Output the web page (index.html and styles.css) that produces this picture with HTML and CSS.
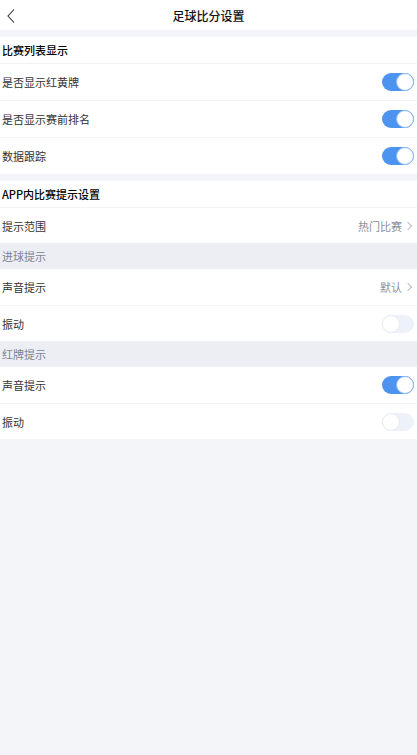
FILE: index.html
```html
<!DOCTYPE html>
<html lang="zh-CN">
<head>
  <meta charset="UTF-8" />
  <title>足球比分设置</title>
  <link rel="stylesheet" href="styles.css">
</head>
<body>

<div class="topbar">
  <span class="back">
    <svg width="10" height="16" viewBox="0 0 10 16"><path d="M8 1.5 L2 8 L8 14.5" fill="none" stroke="#333" stroke-width="1.1"/></svg>
  </span>
  <div class="title">足球比分设置</div>
</div>

<div class="group">
  <div class="group-title">比赛列表显示</div>
  <div class="row"><span>是否显示红黄牌</span><span class="switch on"></span></div>
  <div class="row"><span>是否显示赛前排名</span><span class="switch on"></span></div>
  <div class="row"><span>数据跟踪</span><span class="switch on"></span></div>
</div>

<div class="group compact">
  <div class="group-title">APP内比赛提示设置</div>
  <div class="row"><span>提示范围</span><span class="value">热门比赛 <i class="arrow"></i></span></div>

  <div class="sub-title">进球提示</div>
  <div class="row first"><span>声音提示</span><span class="value">默认 <i class="arrow"></i></span></div>
  <div class="row"><span>振动</span><span class="switch"></span></div>

  <div class="sub-title">红牌提示</div>
  <div class="row first"><span>声音提示</span><span class="switch on"></span></div>
  <div class="row"><span>振动</span><span class="switch"></span></div>
</div>

</body>
</html>
```

FILE: styles.css
```css
body {
    margin: 0;
    background-color: #f4f5f9;
    font-family: "Noto Sans CJK SC", "Noto Sans", sans-serif;
    color: #222;
}

.topbar {
    height: 30px;
    background-color: #fff;
    display: flex;
    align-items: center;
    justify-content: center;
    position: relative;
}

.topbar .back {
    position: absolute;
    left: 6px;
    top: 5px;
}

.topbar .title {
    font-size: 12px;
    font-weight: 500;
    color: #111;
}

.group {
    background-color: #fff;
    margin-top: 7px;
}

.group-title {
    height: 26px;
    line-height: 26px;
    padding-left: 2px;
    font-size: 11px;
    font-weight: 500;
    color: #000;
}

.sub-title {
    height: 26px;
    line-height: 26px;
    padding-left: 2px;
    font-size: 11px;
    color: #7c8394;
    background-color: #eceef3;
}

.row {
    height: 36px;
    border-top: 1px solid #f1f2f5;
    display: flex;
    align-items: center;
    justify-content: space-between;
    padding: 0 3px 0 2px;
    font-size: 11px;
    color: #333;
}

.compact .row {
    height: 35px;
}

.compact .row.first {
    height: 36px;
    border-top: none;
}

.value {
    color: #8a8f9c;
    display: flex;
    align-items: center;
    gap: 3px;
}

.arrow {
    width: 5px;
    height: 5px;
    border-top: 1px solid #b8bcc5;
    border-right: 1px solid #b8bcc5;
    transform: rotate(45deg);
    margin-right: 3px;
}

/* toggle switch */
.switch {
    width: 32px;
    height: 18px;
    border-radius: 9px;
    background-color: #edf2fa;
    position: relative;
}

.switch::after {
    content: "";
    position: absolute;
    left: 0;
    top: 0;
    width: 16px;
    height: 16px;
    border-radius: 50%;
    background-color: #fff;
    border: 1px solid #e6ebf3;
}

.switch.on {
    background-color: #4d94f0;
}

.switch.on::after {
    left: auto;
    right: 0;
    border-color: #8cbaf5;
}
```
